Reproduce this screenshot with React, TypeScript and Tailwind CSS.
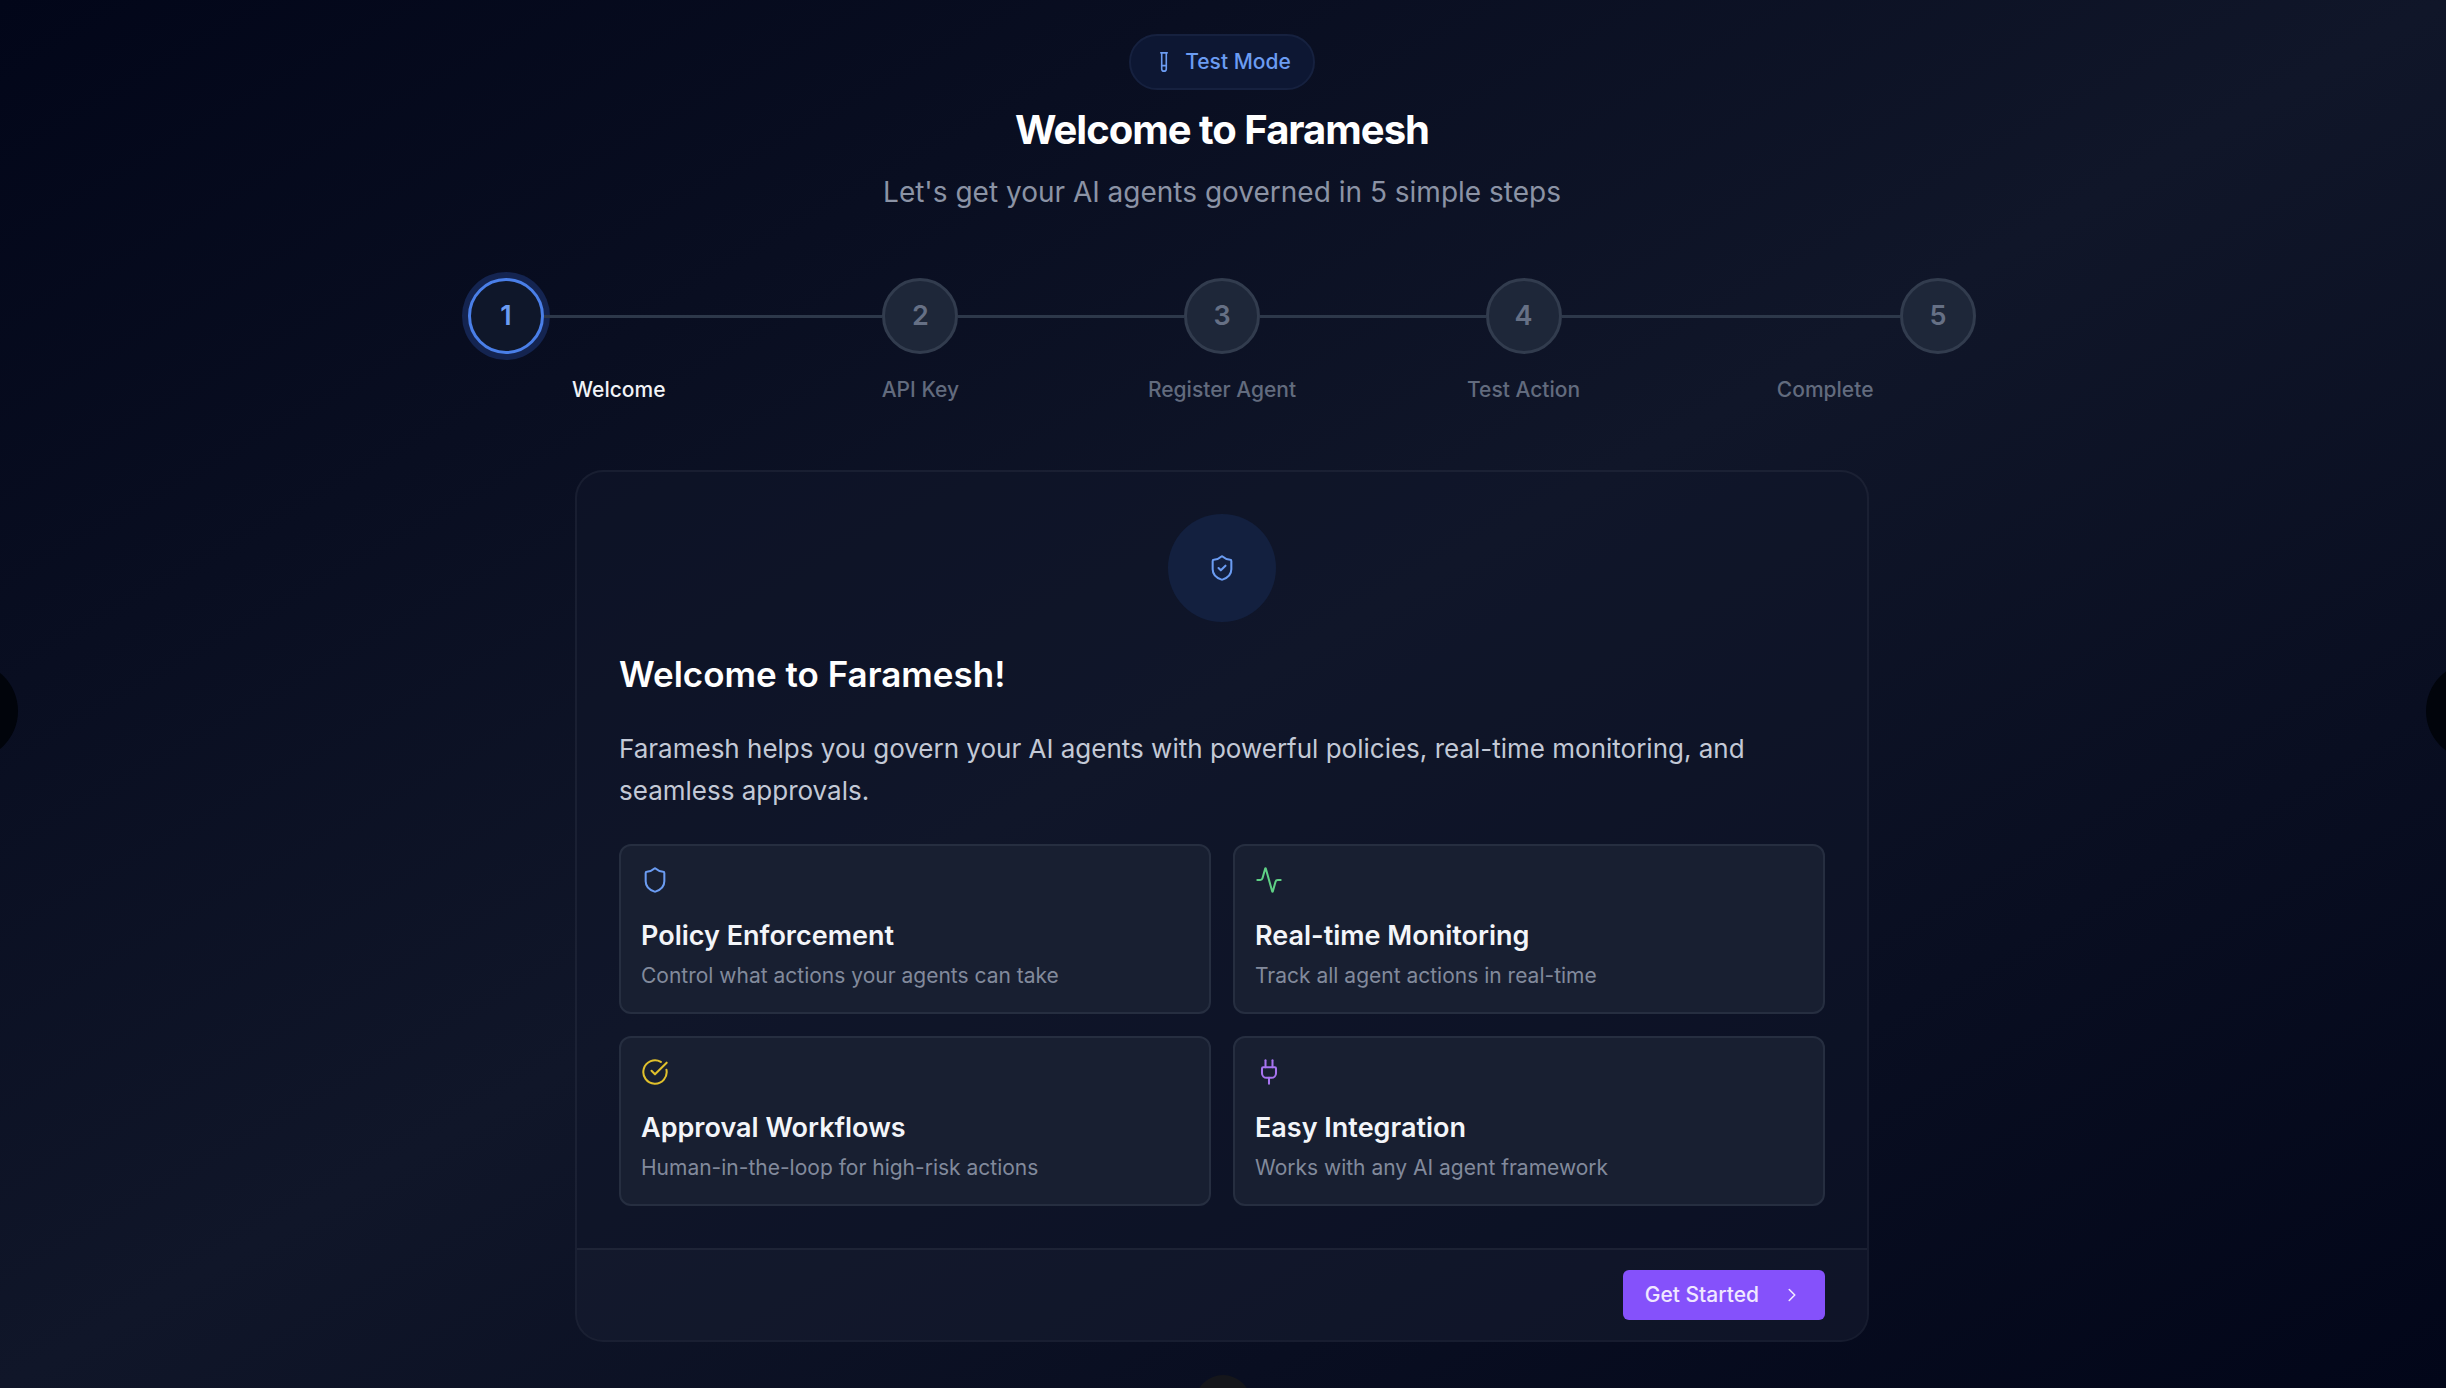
import {
  Activity,
  ChevronRight,
  CircleCheckBig,
  Plug,
  Shield,
  ShieldCheck,
  TestTube,
} from "lucide-react";
import { useState } from "react";

const steps = ["Welcome", "API Key", "Register Agent", "Test Action", "Complete"];

const features = [
  {
    icon: Shield,
    color: "text-[#6b9cf2]",
    title: "Policy Enforcement",
    text: "Control what actions your agents can take",
  },
  {
    icon: Activity,
    color: "text-[#5fd085]",
    title: "Real-time Monitoring",
    text: "Track all agent actions in real-time",
  },
  {
    icon: CircleCheckBig,
    color: "text-[#e0c02c]",
    title: "Approval Workflows",
    text: "Human-in-the-loop for high-risk actions",
  },
  {
    icon: Plug,
    color: "text-[#a774f0]",
    title: "Easy Integration",
    text: "Works with any AI agent framework",
  },
];

function Stepper({ current }: { current: number }) {
  return (
    <ol className="flex w-full max-w-[1508px] mx-auto">
      {steps.map((label, i) => (
        <li key={label} className="flex-1">
          <div className="flex items-center">
            {i > 0 && <div className="flex-1 h-[3px] bg-[#2d384a]" />}
            <div
              className={`size-[76px] shrink-0 rounded-full border-[3px] flex items-center justify-center text-[27px] font-semibold ${
                i === current
                  ? "bg-[#0f172a] border-[#4a7fe8] text-[#6b9cf2] ring-6 ring-[#142450]"
                  : "bg-[#1e2739] border-[#323c4e] text-[#667085]"
              }`}
            >
              {i + 1}
            </div>
            {i < steps.length - 1 && <div className="flex-1 h-[3px] bg-[#2d384a]" />}
          </div>
          <p
            className={`mt-5 text-center text-[21px] leading-8 font-medium ${
              i === current ? "text-[#f1f3f7]" : "text-[#626b7e]"
            }`}
          >
            {label}
          </p>
        </li>
      ))}
    </ol>
  );
}

export default function App() {
  const [current, setCurrent] = useState(0);

  return (
    <div className="relative min-h-screen overflow-hidden bg-linear-to-br/srgb from-[#020619] via-[#101629] to-[#020619] font-[Inter,sans-serif] text-white">
      <main className="pl-6 pr-[26px] pt-[34px] pb-11">
        {/* Header */}
        <header className="flex flex-col items-center text-center">
          <span className="flex items-center gap-2.5 h-14 px-[22px] rounded-full border-2 border-[#16213f] bg-[#0d1733] text-[21px] font-medium text-[#6b9cf2]">
            <TestTube size={22} strokeWidth={1.75} />
            Test Mode
          </span>
          <h1 className="mt-4 text-[40px] leading-12 font-bold tracking-tight">
            Welcome to Faramesh
          </h1>
          <p className="mt-4 text-[28px] leading-11 text-[#8b93a5]">
            Let's get your AI agents governed in 5 simple steps
          </p>
        </header>

        {/* Steps */}
        <div className="mt-16">
          <Stepper current={current} />
        </div>

        {/* Card */}
        <section className="mt-16 mx-auto max-w-[1294px] rounded-[28px] border-2 border-white/5 bg-[#101629]/50 overflow-hidden">
          <div className="p-[42px]">
            <div className="mx-auto size-[108px] rounded-full bg-[#13203f] flex items-center justify-center text-[#6b9cf2]">
              <ShieldCheck size={28} strokeWidth={1.75} />
            </div>
            <h2 className="mt-7 text-[35px] leading-12 font-semibold">
              Welcome to Faramesh!
            </h2>
            <p className="mt-[30px] text-[26px] leading-[42px] text-[#c3c9d6]">
              Faramesh helps you govern your AI agents with powerful policies, real-time
              monitoring, and seamless approvals.
            </p>

            <div className="mt-8 grid grid-cols-2 gap-[22px]">
              {features.map(({ icon: Icon, color, title, text }) => (
                <div
                  key={title}
                  className="rounded-xl border-2 border-[#262e40] bg-[#181f31] p-5"
                >
                  <Icon size={28} strokeWidth={1.75} className={color} />
                  <h3 className="mt-6 text-[27px] leading-9 font-semibold text-[#f3f5f9]">
                    {title}
                  </h3>
                  <p className="mt-1.5 text-[21px] leading-8 text-[#828a9c]">{text}</p>
                </div>
              ))}
            </div>
          </div>

          {/* Footer */}
          <div className="flex justify-end border-t-2 border-white/5 bg-white/2 px-[42px] py-5">
            <button
              onClick={() => setCurrent(Math.min(current + 1, steps.length - 1))}
              className="flex items-center gap-[22px] h-[50px] px-[22px] rounded-md bg-[#8551fb] text-[21px] font-medium text-[#f0e8ff]"
            >
              Get Started
              <ChevronRight size={22} strokeWidth={1.75} />
            </button>
          </div>
        </section>
      </main>

      {/* Previous and next, half off screen */}
      <button
        aria-label="Previous"
        className="absolute top-[662px] -left-20 size-[98px] rounded-full bg-[#01040b]"
      />
      <button
        aria-label="Next"
        className="absolute top-[662px] -right-[78px] size-[98px] rounded-full bg-[#01040b]"
      />
      <div className="absolute top-[1375px] left-1/2 -translate-x-1/2 size-14 rounded-full bg-[#15161b]" />
    </div>
  );
}
